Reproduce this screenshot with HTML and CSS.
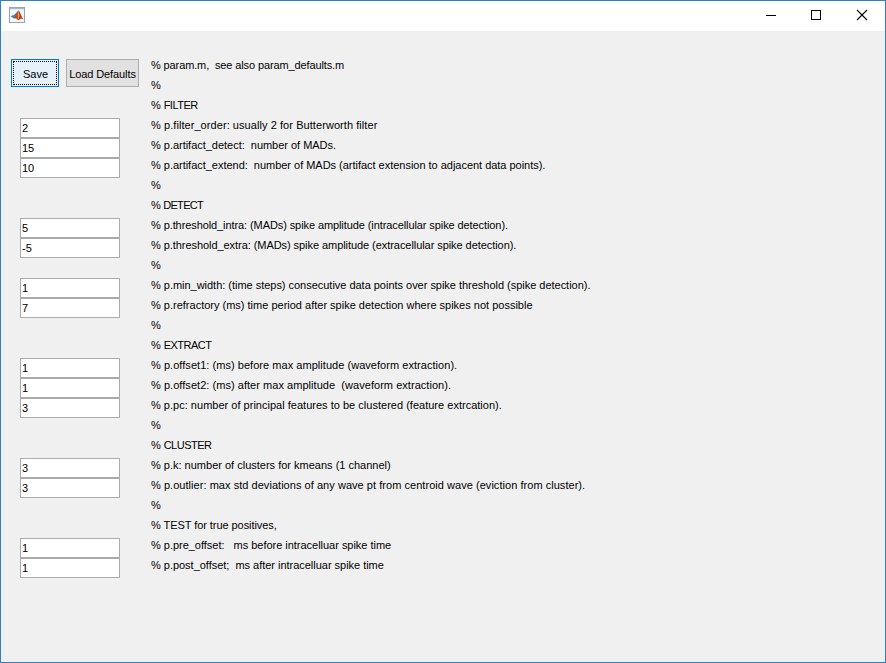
FILE: index.html
```html
<!DOCTYPE html>
<html lang="en">
<head>
<meta charset="utf-8">
<title>Parameters</title>
<link rel="stylesheet" href="styles.css">
</head>
<body>
<div class="window">
  <header class="titlebar">
    <svg class="logo" width="16" height="16" viewBox="0 0 16 16">
      <rect x=".5" y=".5" width="15" height="15" fill="#f3f6f9" stroke="#98a2ae"/>
      <path d="M1 1.500h14" stroke="#9fb9d6" stroke-width="1.400"/>
      <path d="M1.500 9.200l3.700-1.400L9.300 4 7 10.500 5 11.500z" fill="#487fa5"/>
      <path d="M4.500 11.500c2.500-1 3-7.200 5-8 1.500.5 2.500 5.500 5 9-2-1.500-3-1-5.500 1-1-2-2-2.500-4.500-2z" fill="#b9401c"/>
      <path d="M9.400 4c-.9 2-1.200 5.500-.4 8.500 1.600-2 1.700-6 .4-8.500z" fill="#ed9a4a"/>
    </svg>
    <div class="controls">
      <svg width="12" height="12" viewBox="0 0 12 12" shape-rendering="crispEdges"><path d="M1 5.500h10" stroke="#000"/></svg>
      <svg width="12" height="12" viewBox="0 0 12 12" shape-rendering="crispEdges"><path d="M1.500 1.500h9v9h-9z" fill="none" stroke="#000"/></svg>
      <svg width="12" height="12" viewBox="0 0 12 12"><path d="M1 1l10 10M11 1L1 11" stroke="#000" stroke-width="1.100"/></svg>
    </div>
  </header>
  <main class="content">
    <div class="fields">
      <div class="buttons"><button class="btn primary">Save</button><button class="btn load">Load Defaults</button></div>
      <div class="group"><input value="2"><input value="15"><input value="10"></div>
      <div class="group gap2"><input value="5"><input value="-5"></div>
      <div class="group gap1"><input value="1"><input value="7"></div>
      <div class="group gap2"><input value="1"><input value="1"><input value="3"></div>
      <div class="group gap2"><input value="3"><input value="3"></div>
      <div class="group gap2"><input value="1"><input value="1"></div>
    </div>
    <div class="notes">
      <p class="title">% param.m,  see also param_defaults.m</p>
      <p>%</p>
      <p class="heading">% FILTER</p>
      <p class="loose">% p.filter_order: usually 2 for Butterworth filter</p>
      <p class="snug">% p.artifact_detect:  number of MADs.</p>
      <p class="snug">% p.artifact_extend:  number of MADs (artifact extension to adjacent data points).</p>
      <p>%</p>
      <p class="heading detect">% DETECT</p>
      <p class="tight">% p.threshold_intra: (MADs) spike amplitude (intracellular spike detection).</p>
      <p class="close">% p.threshold_extra: (MADs) spike amplitude (extracellular spike detection).</p>
      <p>%</p>
      <p class="snug">% p.min_width: (time steps) consecutive data points over spike threshold (spike detection).</p>
      <p>% p.refractory (ms) time period after spike detection where spikes not possible</p>
      <p>%</p>
      <p class="heading">% EXTRACT</p>
      <p class="wide">% p.offset1: (ms) before max amplitude (waveform extraction).</p>
      <p class="wide">% p.offset2: (ms) after max amplitude  (waveform extraction).</p>
      <p class="open">% p.pc: number of principal features to be clustered (feature extrcation).</p>
      <p>%</p>
      <p class="heading">% CLUSTER</p>
      <p>% p.k: number of clusters for kmeans (1 channel)</p>
      <p class="wide">% p.outlier: max std deviations of any wave pt from centroid wave (eviction from cluster).</p>
      <p>%</p>
      <p class="close">% TEST for true positives,</p>
      <p class="snug">% p.pre_offset:   ms before intracelluar spike time</p>
      <p class="snug">% p.post_offset;  ms after intracelluar spike time</p>
    </div>
  </main>
</div>
</body>
</html>
```

FILE: styles.css
```css
* { box-sizing: border-box; }
body { margin: 0; font: 11px/15px "Liberation Sans", Arial, sans-serif; color: #000; }
.window { width: 886px; height: 663px; border: 1px solid #2f7fc1; background: #f0f0f0; overflow: hidden; }
.titlebar { height: 30px; background: #fff; display: flex; justify-content: space-between; padding: 6px 17px 0 8px; }
.titlebar svg { display: block; }
.controls { display: flex; gap: 34px; padding-top: 2px; }
.controls svg:first-child { margin: 1px -1px 0 0; }
.content { display: flex; padding-top: 27px; }
.fields { width: 150px; padding: 1px 0 0 10px; }
.buttons { display: flex; gap: 7px; height: 28px; margin-bottom: 31px; }
.btn { font: inherit; color: #000; background: #e1e1e1; border: 1px solid #adadad; border-radius: 0; padding: 2px 0 0; width: 73px; white-space: nowrap; }
.btn.primary { width: 48px; background: #e5f1fb; border-color: #0078d7; outline: 1px dotted #000; outline-offset: -3px; padding-left: 1px; }
.load { letter-spacing: -.1px; }
.group { margin-left: 9px; width: 100px; display: flex; flex-direction: column; }
.gap1 { margin-top: 20px; }
.gap2 { margin-top: 40px; }
input { display: block; width: 100px; height: 20px; border: 1px solid #ababab; border-radius: 0; padding: 0 1px; font: inherit; background: #fff; color: #000; }
.notes p { margin: 0; height: 20px; white-space: pre; }
.notes .title { letter-spacing: -.12px; }
.notes .heading { letter-spacing: -.5px; word-spacing: .8px; }
.notes .detect { letter-spacing: -.7px; }
.notes .tight { letter-spacing: -.09px; }
.notes .close { letter-spacing: -.06px; }
.notes .snug { letter-spacing: -.022px; }
.notes .open { letter-spacing: .015px; }
.notes .wide { letter-spacing: .042px; }
.notes .loose { letter-spacing: .065px; }
```
